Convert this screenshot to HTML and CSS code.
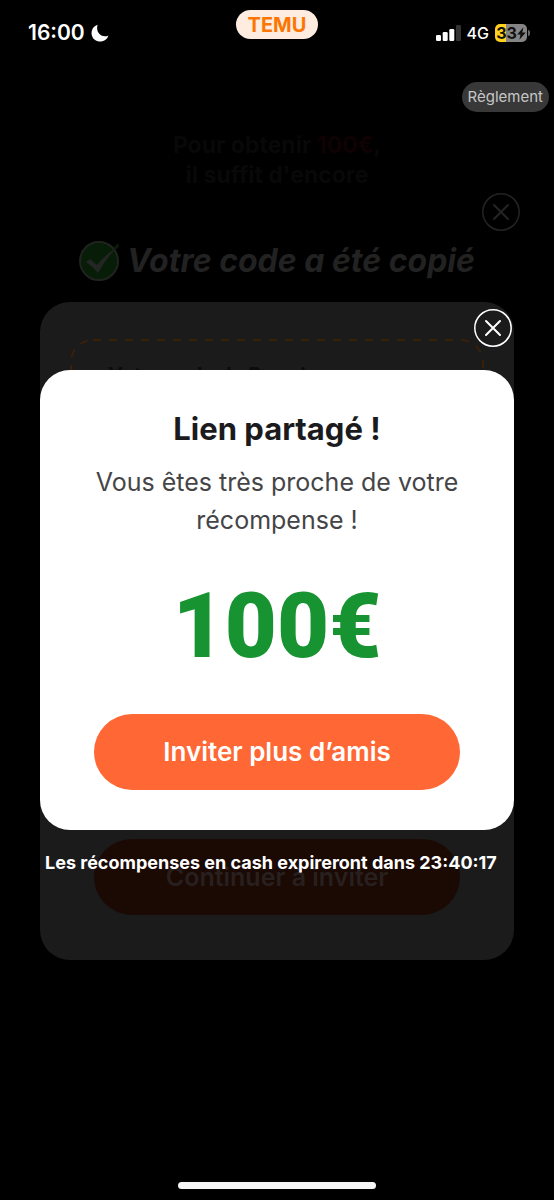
FILE: index.html
```html
<!DOCTYPE html>
<html lang="fr">
<head>
<meta charset="utf-8">
<meta name="viewport" content="width=device-width, initial-scale=1">
<title>Temu</title>
<link rel="stylesheet" href="styles.css">
</head>
<body>
<div class="screen">
  <div class="layer page">
    <div class="status">
      <div class="status-left">
        <span class="time">16:00</span>
        <svg class="moon" viewBox="0 0 18 18" aria-hidden="true"><path d="M6.6 .8A8.6 8.6 0 1 0 17.4 11.4C12 14.5 4 9.5 6.6 .8Z" fill="#fff"/></svg>
      </div>
      <span class="brand">TEMU</span>
      <div class="status-right">
        <svg class="signal" viewBox="0 0 25 16" aria-hidden="true">
          <rect x="0" y="10" width="5" height="6" rx="1.3" fill="#fff"/>
          <rect x="6.7" y="7" width="5" height="9" rx="1.3" fill="#fff"/>
          <rect x="13.3" y="4" width="5" height="12" rx="1.3" fill="#fff"/>
          <rect x="20" y="0" width="5" height="16" rx="1.3" fill="#333"/>
        </svg>
        <span class="network">4G</span>
        <div class="battery">
          <span class="battery-body">33<svg class="bolt" viewBox="0 0 9 13" aria-hidden="true"><path d="M6.4 .3.2 7.4h3.3L2.4 12.7 8.8 5.4H5.3Z" fill="#111"/></svg></span>
          <span class="battery-tip"></span>
        </div>
      </div>
    </div>
    <div class="page-nav"><button class="rules" type="button">Règlement</button></div>
    <div class="page-intro">Pour obtenir <span class="page-amount">100€</span>,<br>il suffit d'encore</div>
    <div class="home"></div>
  </div>

  <section class="layer copied">
    <button class="close close-dim" type="button" aria-label="Fermer">
      <svg viewBox="0 0 38 38" aria-hidden="true"><circle cx="19" cy="19" r="18.2"/><path d="M12 12 26 26M26 12 12 26"/></svg>
    </button>
    <h2 class="copied-title">
      <svg class="check" viewBox="0 0 42 42" aria-hidden="true"><circle cx="20" cy="21" r="19" fill="#071d07" stroke="#202320" stroke-width="2"/><path d="M35 7 39 3 40 7 36 10Z" fill="#071d07"/><path d="M7 22 11 19 18 25Q26 15 37 8 26 20 19 33Q13 26 7 22Z" fill="#242624"/></svg>
      <span>Votre code a été copié</span>
    </h2>
    <div class="copied-sheet">
      <div class="code-box">
        <svg class="code-outline" aria-hidden="true"><rect x="1" y="1" width="100%" height="100%" rx="22" class="code-dash"/></svg>
        <p class="code-label">Votre code de Parrainage</p>
      </div>
      <button class="cta cta-dim" type="button">Continuer à inviter</button>
    </div>
  </section>

  <section class="layer shared">
    <button class="close" type="button" aria-label="Fermer">
      <svg viewBox="0 0 38 38" aria-hidden="true"><circle cx="19" cy="19" r="18.2"/><path d="M12 12 26 26M26 12 12 26"/></svg>
    </button>
    <div class="sheet">
      <h1 class="title">Lien partagé !</h1>
      <p class="lead">Vous êtes très proche de votre récompense !</p>
      <p class="amount">100€</p>
      <button class="cta" type="button">Inviter plus d’amis</button>
    </div>
    <p class="expiry">Les récompenses en cash expireront dans 23:40:17</p>
  </section>
</div>
</body>
</html>
```

FILE: styles.css
```css
* { box-sizing: border-box; }
body { margin: 0; background: #000; font-family: Inter, "Liberation Sans", sans-serif; }
h1, h2, p { margin: 0; }
button { border: 0; padding: 0; font-family: inherit; cursor: pointer; }
svg { display: block; }

.screen { display: grid; min-height: 100vh; }
.layer { grid-area: 1 / 1; display: flex; flex-direction: column; min-width: 0; }

.page { align-items: stretch; }
.status { display: grid; grid-template-columns: 1fr auto 1fr; align-items: start; padding: 10px 24px 0; height: 82px; color: #fff; }
.status-left { display: flex; align-items: center; gap: 6px; padding: 10px 0 0 4px; }
.time { font-size: 21px; line-height: 26px; font-weight: 600; }
.moon { width: 18px; height: 18px; }
.brand { padding: 1px 12px 0; border-radius: 15px; background: #ffece1; color: #fb7701; font-size: 20px; line-height: 28px; font-weight: 700; }
.status-right { display: flex; align-items: center; justify-content: flex-end; gap: 6px; padding-top: 10px; }
.signal { width: 25px; height: 16px; }
.network { font-size: 16px; line-height: 26px; font-weight: 500; }
.battery { display: flex; align-items: center; gap: 1px; }
.battery-body { display: flex; align-items: center; justify-content: center; width: 32px; height: 18px; border-radius: 5px; background: linear-gradient(90deg, #ffd21f 34%, #858585 34%); color: #111; font-size: 16px; font-weight: 700; }
.bolt { width: 9px; height: 13px; }
.battery-tip { width: 2px; height: 6px; border-radius: 0 2px 2px 0; background: #666; }

.page-nav { display: flex; justify-content: flex-end; padding-right: 5px; }
.rules { padding: 0 6px; border-radius: 15px; background: #383838; color: #c6c6c6; font-size: 15px; line-height: 30px; }
.page-intro { padding-top: 18px; text-align: center; font-size: 23px; line-height: 30px; font-weight: 700; color: #080808; }
.page-amount { color: #100202; }
.home { width: 198px; height: 7px; margin: auto auto 11px; border-radius: 4px; background: #f5f5f5; }

.close { width: 38px; height: 38px; border-radius: 50%; background: none; align-self: flex-end; flex: none; }
.close circle, .close path { fill: none; stroke: #fff; stroke-width: 2; stroke-linecap: round; }
.close circle { stroke-width: 1.5; }
.close-dim circle, .close-dim path { stroke: #242424; }

.copied { padding: 193px 40px 0; z-index: 1; pointer-events: none; }
.copied .close { margin-right: -6px; }
.copied-title { display: flex; align-items: center; justify-content: center; gap: 6px; padding-top: 9px; font-size: 32px; line-height: 42px; font-weight: 700; font-style: italic; color: #222; white-space: nowrap; }
.check { width: 42px; height: 42px; flex: none; }
.copied-sheet { display: flex; flex-direction: column; align-items: center; margin-top: 20px; padding: 37px 30px 45px; height: 658px; border-radius: 30px; background: #1b1b1b; }
.code-box { position: relative; align-self: stretch; height: 200px; padding: 24px 38px; }
.code-outline { position: absolute; inset: 0; width: 100%; height: 100%; padding: 0 2px 2px 0; overflow: visible; }
.code-dash { fill: none; stroke: #3a2008; stroke-width: 2; stroke-dasharray: 8 8; }
.code-label { font-size: 20px; line-height: 24px; font-weight: 700; color: #0b0b0b; }

.cta { width: 366px; max-width: 100%; border-radius: 38px; background: #ff6835; color: #fff; font-size: 26px; line-height: 76px; font-weight: 600; }
.cta-dim { margin-top: auto; background: #1b0904; color: #28201f; font-size: 25px; font-weight: 600; }

.shared { padding: 309px 40px 0; z-index: 2; }
.shared .close { margin-right: 2px; }
.sheet { display: flex; flex-direction: column; align-items: center; margin-top: 23px; padding: 38px 40px 40px; border-radius: 30px; background: #fff; text-align: center; }
.title { font-size: 31px; line-height: 42px; font-weight: 700; color: #1b1b1e; }
.lead { padding-top: 13px; font-size: 25px; line-height: 38px; color: #454547; }
.amount { padding: 38px 0 37px; font-family: Roboto, Inter, sans-serif; font-size: 90px; line-height: 100px; font-weight: 900; color: #179332; }
.expiry { margin: 20px -8px 0 5px; font-size: 18px; line-height: 26px; font-weight: 700; color: #fff; white-space: nowrap; }
```
